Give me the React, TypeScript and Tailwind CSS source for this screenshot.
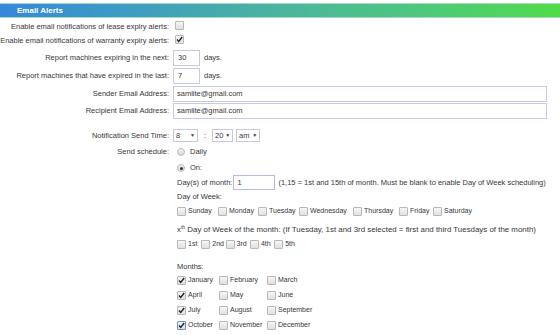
import React from 'react';

const Box = ({ checked = false, focus = false }: { checked?: boolean; focus?: boolean }) => (
  <span
    className={`relative inline-block w-[9px] h-[9px] shrink-0 rounded-[1px] border bg-gradient-to-b from-[#f6f6f6] to-[#e0e0e0] ${
      focus ? 'border-[#6f8fc9]' : 'border-[#b8b8b8]'
    }`}
  >
    {checked && (
      <svg viewBox="0 0 9 9" className="absolute -top-px -left-px w-[9px] h-[9px]">
        <path d="M2 4.6 L3.7 6.4 L7.2 2" fill="none" stroke="#222" strokeWidth="1.4" />
      </svg>
    )}
  </span>
);

const Radio = ({ checked = false }: { checked?: boolean }) => (
  <span className="relative inline-flex items-center justify-center w-[8px] h-[8px] shrink-0 rounded-full border border-[#bcbcbc] bg-gradient-to-b from-[#f2f2f2] to-[#d8d8d8]">
    {checked && <span className="w-[3px] h-[3px] rounded-full bg-[#333]" />}
  </span>
);

const Sel = ({ value, w }: { value: string; w: string }) => (
  <span className={`inline-flex items-center justify-between h-[13px] px-[2px] border border-[#c9c9dc] bg-white ${w}`}>
    <span>{value}</span>
    <span className="text-[5px] leading-none">▼</span>
  </span>
);

const Check = ({ label, checked = false, focus = false, w }: { label: string; checked?: boolean; focus?: boolean; w?: string }) => (
  <span className={`inline-flex items-center gap-[2px] whitespace-nowrap shrink-0 text-[7px] ${w ?? ''}`}>
    <Box checked={checked} focus={focus} />
    <span>{label}</span>
  </span>
);

const Row = ({ label, h, children }: { label?: string; h: string; children?: React.ReactNode }) => (
  <div className={`flex items-center ${h}`}>
    <div className="w-[169px] text-right whitespace-nowrap">{label}</div>
    <div className="ml-[4px] flex items-center flex-1 min-w-0">{children}</div>
  </div>
);

const weekdays = [
  ['Sunday', 'w-[41px]'],
  ['Monday', 'w-[40px]'],
  ['Tuesday', 'w-[41px]'],
  ['Wednesday', 'w-[54px]'],
  ['Thursday', 'w-[46px]'],
  ['Friday', 'w-[34px]'],
  ['Saturday', 'w-[40px]'],
];

const months: [string, boolean, boolean][] = [
  ['January', true, false], ['February', false, false], ['March', false, false],
  ['April', true, false], ['May', false, false], ['June', false, false],
  ['July', true, false], ['August', false, false], ['September', false, false],
  ['October', true, true], ['November', false, false], ['December', false, false],
];

export default function App() {
  return (
    <div className="w-[560px] h-[335px] overflow-hidden bg-white text-[#383838] text-[7.5px] font-['Liberation_Sans',Arial,sans-serif] pt-[3px]">
      <div className="h-[15px] flex items-center pl-[17px] bg-gradient-to-r from-[#3787dc] via-[#4cb49e] to-[#50dc46] border-y border-[#a9d8c2] text-white font-bold text-[8px]">
        Email Alerts
      </div>

      <Row label="Enable email notifications of lease expiry alerts:" h="h-[12px] mt-[3px]">
        <span className="ml-[2px]"><Box /></span>
      </Row>
      <Row label="Enable email notifications of warranty expiry alerts:" h="h-[16px]">
        <span className="ml-[2px]"><Box checked /></span>
      </Row>
      <Row label="Report machines expiring in the next:" h="h-[18px]">
        <span className="w-[27px] h-[16px] border border-[#c9c9e4] flex items-center pl-[4px]">30</span>
        <span className="ml-[4px]">days.</span>
      </Row>
      <Row label="Report machines that have expired in the last:" h="h-[18px]">
        <span className="w-[27px] h-[16px] border border-[#c9c9e4] flex items-center pl-[4px]">7</span>
        <span className="ml-[4px]">days.</span>
      </Row>
      <Row label="Sender Email Address:" h="h-[17px]">
        <span className="w-[374px] h-[16px] border border-[#c9c9e4] flex items-center pl-[3px]">samlite@gmail.com</span>
      </Row>
      <Row label="Recipient Email Address:" h="h-[17px]">
        <span className="w-[374px] h-[16px] border border-[#c9c9e4] flex items-center pl-[3px]">samlite@gmail.com</span>
      </Row>

      <Row label="Notification Send Time:" h="h-[15px] mt-[9px]">
        <Sel value="8" w="w-[25px]" />
        <span className="mx-[6px]">:</span>
        <Sel value="20" w="w-[21px]" />
        <span className="ml-[3px]"><Sel value="am" w="w-[24px]" /></span>
      </Row>

      <div className="flex">
        <div className="w-[169px] text-right h-[18px] leading-[18px]">Send schedule:</div>
        <div className="ml-[8px] flex flex-col">
          <div className="h-[18px] flex items-center gap-[5px]"><Radio /> <span>Daily</span></div>
          <div className="h-[14px] flex items-center gap-[5px]"><Radio checked /> <span>On:</span></div>
          <div className="h-[15px] flex items-center">
            <span>Day(s) of month:</span>
            <span className="ml-[1px] w-[42px] h-[15px] border border-[#b9b9e8] flex items-center pl-[3px]">1</span>
            <span className="ml-[3px] whitespace-nowrap">(1,15 = 1st and 15th of month. Must be blank to enable Day of Week scheduling)</span>
          </div>
          <div className="h-[14px] flex items-center">Day of Week:</div>
          <div className="h-[14px] flex items-center">
            {weekdays.map(([d, w]) => (
              <Check key={d} label={d} w={w} />
            ))}
          </div>
          <div className="h-[15px] mt-[4px] flex items-center whitespace-nowrap text-[7.9px]">
            <span>x<sup className="text-[5px]">th</sup> Day of Week of the month: (If Tuesday, 1st and 3rd selected = first and third Tuesdays of the month)</span>
          </div>
          <div className="h-[14px] flex items-center">
            {['1st', '2nd', '3rd', '4th', '5th'].map((n) => (
              <Check key={n} label={n} w="w-[24.3px]" />
            ))}
          </div>
          <div className="h-[12px] mt-[10px] flex items-center">Months:</div>
          <div className="grid grid-cols-[42px_48px_60px]">
            {months.map(([m, c, f]) => (
              <div key={m} className="h-[15px] flex items-center">
                <Check label={m} checked={c} focus={f} />
              </div>
            ))}
          </div>
        </div>
      </div>
    </div>
  );
}
